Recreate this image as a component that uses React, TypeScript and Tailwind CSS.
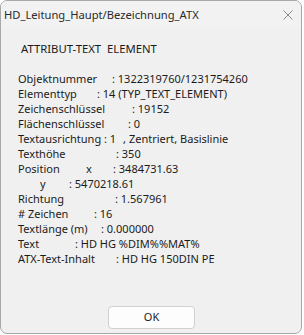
import React from "react";

const rows: { label: React.ReactNode; cls: string; value: React.ReactNode }[] = [
  { label: "Objektnummer", cls: "w-[94px]", value: ": 1322319760/1231754260" },
  { label: "Elementtyp", cls: "w-[79px]", value: ": 14 (TYP_TEXT_ELEMENT)" },
  { label: "Zeichenschlüssel", cls: "w-[114px]", value: ": 19152" },
  { label: "Flächenschlüssel", cls: "w-[110px]", value: ": 0" },
  {
    label: "Textausrichtung",
    cls: "w-[86px]",
    value: (
      <span className="flex">
        <span>: 1</span>
        <span className="ml-[7px]">, Zentriert, Basislinie</span>
      </span>
    ),
  },
  { label: "Texthöhe", cls: "w-[98px]", value: ": 350" },
  {
    label: (
      <span className="flex">
        <span className="w-[68px]">Position</span>
        <span>x</span>
      </span>
    ),
    cls: "w-[95px]",
    value: ": 3484731.63",
  },
  {
    label: (
      <span className="flex">
        <span className="w-[22px]" />
        <span>y</span>
      </span>
    ),
    cls: "w-[51px]",
    value: ": 5470218.61",
  },
  { label: "Richtung", cls: "w-[97px]", value: ": 1.567961" },
  { label: "# Zeichen", cls: "w-[76px]", value: ": 16" },
  { label: "Textlänge (m)", cls: "w-[83px]", value: ": 0.000000" },
  { label: "Text", cls: "w-[57px]", value: ": HD HG %DIM%%MAT%" },
  { label: "ATX-Text-Inhalt", cls: "w-[98px]", value: ": HD HG 150DIN PE" },
];

export default function App() {
  return (
    <div className="w-[304px] h-[335px] bg-white font-['Noto_Sans',sans-serif]">
      <div className="w-[302px] h-[334px] rounded-[7px] border border-[#a8a8a8] bg-[#f0f0f0] flex flex-col overflow-hidden text-[#1b1b1b]">
        <div className="h-[28px] flex items-center justify-between pl-[3px] pr-[8px] bg-[#f2f2f2]">
          <span className="text-[11.2px] text-[#2a2a2a]">HD_Leitung_Haupt/Bezeichnung_ATX</span>
          <svg width="10" height="10" viewBox="0 0 10 10">
            <path d="M0.5 0.5 L9.5 9.5 M9.5 0.5 L0.5 9.5" stroke="#8a8a8a" strokeWidth="1" />
          </svg>
        </div>
        <div className="flex-1 flex flex-col pl-[17px] pt-[12px]">
          <div className="text-[11.3px] leading-[15px] pl-[3px]">ATTRIBUT-TEXT&nbsp; ELEMENT</div>
          <div className="mt-[15px] flex flex-col text-[11px] leading-[15px]">
            {rows.map((r, i) => (
              <div key={i} className="flex whitespace-pre">
                <span className={r.cls + " shrink-0"}>{r.label}</span>
                <span>{r.value}</span>
              </div>
            ))}
          </div>
          <div className="mt-[40px] flex pl-[90px]">
            <button className="w-[87px] h-[23px] rounded-[4px] border border-[#d0d0d0] bg-[#fdfdfd] text-[11px] text-[#1b1b1b] flex items-center justify-center">
              OK
            </button>
          </div>
        </div>
      </div>
    </div>
  );
}
